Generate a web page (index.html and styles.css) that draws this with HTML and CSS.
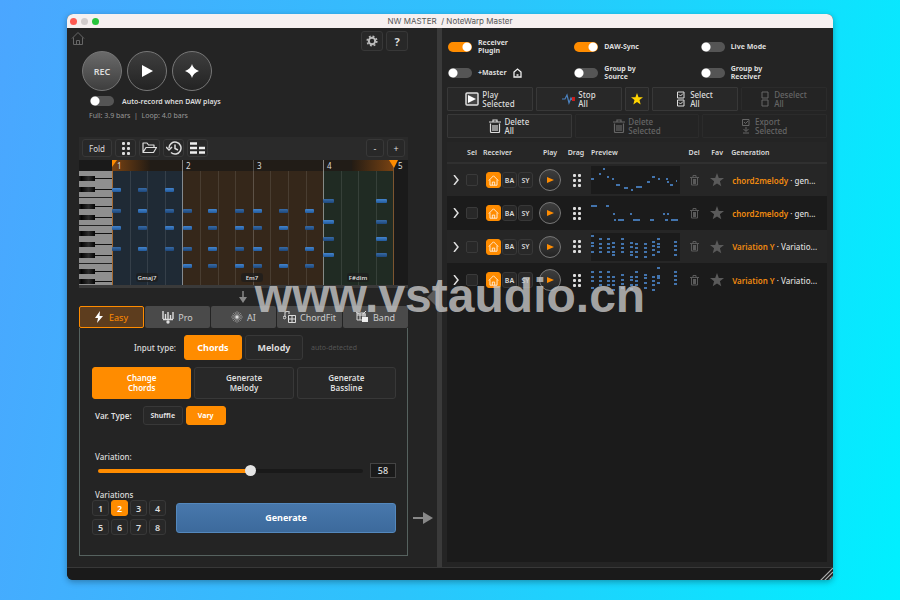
FILE: index.html
```html
<!DOCTYPE html>
<html lang="en">
<head>
  <meta charset="UTF-8" />
  <meta name="viewport" content="width=device-width, initial-scale=1.0" />
  <title>NW MASTER / NoteWarp Master</title>
  <link rel="stylesheet" href="styles.css">
</head>
<body>
  <!-- shared icons -->
  <svg class="sprite" aria-hidden="true">
    <symbol id="i-home" viewBox="0 0 14 14"><path d="M1 7 7 1l6 6M2.500 6v7h9V6M5.500 13V9h3v4" fill="none" stroke="currentColor"/></symbol>
    <symbol id="i-dots" viewBox="0 0 9 13"><g fill="currentColor"><rect x="1" y="0" width="3" height="3" rx="1"/><rect x="6" y="0" width="3" height="3" rx="1"/><rect x="1" y="5" width="3" height="3" rx="1"/><rect x="6" y="5" width="3" height="3" rx="1"/><rect x="1" y="10" width="3" height="3" rx="1"/><rect x="6" y="10" width="3" height="3" rx="1"/></g></symbol>
    <symbol id="i-trash" viewBox="0 0 12 14"><path d="M0 3h12M4 3V1h4v2M1.500 4.500v8q0 1 1 1h7q1 0 1-1v-8M4 6v6M6 6v6M8 6v6" fill="none" stroke="currentColor" stroke-width="1.200"/></symbol>
    <symbol id="i-star" viewBox="0 0 14 14"><path d="m7 0 1.800 4.900 5.200.2-4.100 3.200 1.400 5L7 10.400l-4.300 2.900 1.400-5L0 5.100l5.200-.2z" fill="currentColor"/></symbol>
    <symbol id="i-check" viewBox="0 0 8 16"><path d="M.5 1h6.500v6H.5zM.5 9H7v6H.5zM2 3.500l1.500 1.500L6 2.500M2 11.500l1.500 1.500L6 10.500" fill="none" stroke="currentColor"/></symbol>
    <symbol id="i-boxes" viewBox="0 0 8 16"><path d="M1 1h6v6H1zM1 9h6v6H1z" fill="none" stroke="currentColor"/></symbol>
  </svg>

  <div class="window">
    <header class="titlebar">
      <div class="lights"><i class="red"></i><i></i><i class="green"></i></div>
      <div class="title">NW MASTER &nbsp;/ NoteWarp Master</div>
    </header>

    <main class="panes">
      <section class="left">
        <div class="top-row">
          <svg class="home"><use href="#i-home"/></svg>
          <div class="top-buttons">
            <button class="btn square" aria-label="Settings"><svg width="12" height="12" viewBox="0 0 12 12"><circle cx="6" cy="6" r="3.200" fill="none" stroke="#bbb" stroke-width="2"/><circle cx="6" cy="6" r="4.800" fill="none" stroke="#bbb" stroke-width="1.600" stroke-dasharray="1.900 1.870"/></svg></button>
            <button class="btn square help">?</button>
          </div>
        </div>

        <div class="transport">
          <button class="round rec">REC</button>
          <button class="round" aria-label="Play"><svg width="12" height="12" viewBox="0 0 12 12"><path d="M1 0v12l11-6z" fill="#fff"/></svg></button>
          <button class="round" aria-label="Magic"><svg width="14" height="14" viewBox="0 0 14 14"><path d="M7 0q1.200 5 7 7-5.800 2-7 7-1.200-5-7-7 5.800-2 7-7z" fill="#fff"/></svg></button>
        </div>
        <label class="auto"><input type="checkbox" class="switch">Auto-record when DAW plays</label>
        <p class="info">Full: 3.9 bars &nbsp;|&nbsp; Loop: 4.0 bars</p>

        <div class="editor">
          <div class="toolbar">
            <button class="btn fold">Fold</button>
            <button class="btn" aria-label="Drag"><svg width="9" height="13"><use href="#i-dots"/></svg></button>
            <button class="btn" aria-label="Open"><svg width="15" height="12" viewBox="0 0 15 12"><path d="M1 10.500V1h4l1.500 2H12v2.500M1 10.500l3-5h10.500l-3 5z" fill="none" stroke="#ddd" stroke-width="1.200" stroke-linejoin="round"/></svg></button>
            <button class="btn" aria-label="History"><svg width="16" height="14" viewBox="0 0 16 14"><path d="M3 7a6 6 0 1 1 2 4.500M0 6l3 3 3-3M9 3.500V7.500l3 1.500" fill="none" stroke="#ddd" stroke-width="1.500"/></svg></button>
            <button class="btn" aria-label="Bars"><svg width="15" height="12" viewBox="0 0 15 12"><path d="M0 1.500h7M0 6h7M9 6h6M0 10.500h7M9 10.500h6" stroke="#eee" stroke-width="2.500"/></svg></button>
            <button class="btn zoom first">-</button>
            <button class="btn zoom">+</button>
          </div>
          <svg class="roll" id="roll" viewBox="0 0 329 125">
            <defs>
              <linearGradient id="loopIn"><stop offset="0" stop-color="#7a4312"/><stop offset="1" stop-color="#241c14"/></linearGradient>
              <linearGradient id="loopOut"><stop offset="0" stop-color="#241c14"/><stop offset="1" stop-color="#7a4312"/></linearGradient>
              <linearGradient id="key"><stop offset="0" stop-color="#222"/><stop offset=".15" stop-color="#050505"/><stop offset=".6" stop-color="#2c2c2c"/><stop offset="1" stop-color="#050505"/></linearGradient>
              <linearGradient id="note" x2="0" y2="1"><stop offset="0" stop-color="#4484cc"/><stop offset="1" stop-color="#225a9c"/></linearGradient>
              <linearGradient id="noteDim" x2="0" y2="1"><stop offset="0" stop-color="#386ba6"/><stop offset="1" stop-color="#1d477b"/></linearGradient>
            </defs>
          </svg>
          <div class="scroll"></div>
        </div>

        <svg class="arrow-down" viewBox="0 0 10 12"><path d="M1 6h8l-4 6z" fill="#888"/><path d="M5 0v7" stroke="#888" stroke-width="1.500"/></svg>

        <nav class="tabs">
          <button class="tab active"><svg width="8" height="12" viewBox="0 0 8 12"><path d="M5 0 0 7h3L2 12l6-7H4.500z" fill="#fff"/></svg>Easy</button>
          <button class="tab"><svg width="12" height="13" viewBox="0 0 12 13"><path d="M1 0v8M3.500 3v6M6 1v8M8.500 4v5M11 1v7M1 8.500h10" stroke="#ddd" stroke-width="1.400"/><circle cx="6" cy="11" r="1.700" fill="#ddd"/></svg>Pro</button>
          <button class="tab"><svg width="12" height="12" viewBox="0 0 12 12"><path d="M6 0v12M0 6h12M2 2l8 8M10 2l-8 8M4 1l4 10M8 1 4 11M1 4l10 4M1 8l10-4" stroke="#aaa" stroke-width=".6"/><circle cx="6" cy="6" r="1.500" fill="#ddd"/></svg>AI</button>
          <button class="tab"><svg width="13" height="12" viewBox="0 0 13 12"><path d="M5.500 4.500h7v7h-7zM9 4.500v7M5.500 8h7M2 6V1l4-1v3" fill="none" stroke="#ddd"/><circle cx="1.500" cy="6.500" r="1.300" fill="none" stroke="#ddd"/></svg>ChordFit</button>
          <button class="tab"><svg width="13" height="12" viewBox="0 0 13 12"><path d="M1 2h8v7H1zM1 4h9M4 2v7M7 2v7M0 1l3 2M10 0 7 3" fill="none" stroke="#ddd"/><path d="M6 6h6v5H6z" fill="#eee"/></svg>Band</button>
        </nav>

        <div class="workspace">
          <div class="panel">
            <div class="line input-type">
              <span>Input type:</span>
              <div class="group">
                <button class="btn big on">Chords</button>
                <button class="btn big">Melody</button>
              </div>
              <small>auto-detected</small>
            </div>
            <div class="modes">
              <button class="btn on">Change<br>Chords</button>
              <button class="btn">Generate<br>Melody</button>
              <button class="btn">Generate<br>Bassline</button>
            </div>
            <div class="line var-type">
              <span>Var. Type:</span>
              <div class="group">
                <button class="btn small">Shuffle</button>
                <button class="btn small on">Vary</button>
              </div>
            </div>
            <label class="caption" for="variation">Variation:</label>
            <div class="slider">
              <input type="range" id="variation" min="0" max="100" value="58">
              <input type="text" id="amount" aria-label="Variation amount" value="58">
            </div>
            <div class="bottom">
              <div>
                <div class="caption">Variations</div>
                <div class="counts">
                  <button class="btn">1</button><button class="btn on">2</button><button class="btn">3</button><button class="btn">4</button>
                  <button class="btn">5</button><button class="btn">6</button><button class="btn">7</button><button class="btn">8</button>
                </div>
              </div>
              <button class="generate">Generate</button>
            </div>
          </div>
          <svg class="arrow-right" viewBox="0 0 20 12"><path d="M0 6h10" stroke="#888" stroke-width="2"/><path d="M10 0v12l10-6z" fill="#888"/></svg>
        </div>
      </section>

      <div class="divider"><svg class="handle" viewBox="0 0 12 24"><path d="M12 0v24L0 12z" fill="#5a5a5a"/></svg></div>

      <section class="right">
        <div class="options">
          <label><input type="checkbox" class="switch" checked><span>Receiver<br>Plugin</span></label>
          <label><input type="checkbox" class="switch" checked><span>DAW-Sync</span></label>
          <label><input type="checkbox" class="switch"><span>Live Mode</span></label>
          <label><input type="checkbox" class="switch"><span>+Master</span><svg width="9" height="10" viewBox="0 0 9 10"><path d="M1 9V4l3.500-3L8 4v5zM3.500 7h2" fill="none" stroke="#eee" stroke-width="1.300"/></svg></label>
          <label><input type="checkbox" class="switch"><span>Group by<br>Source</span></label>
          <label><input type="checkbox" class="switch"><span>Group by<br>Receiver</span></label>
        </div>

        <div class="actions five">
          <button class="btn"><svg width="14" height="14" viewBox="0 0 14 14"><rect x="1" y="1" width="12" height="12" rx="1" fill="#444" stroke="#ddd" stroke-width="1.500"/><path d="M3 3v8l8-4z" fill="#fff"/></svg><span>Play<br>Selected</span></button>
          <button class="btn"><svg width="13" height="12" viewBox="0 0 13 12"><path d="M0 6h3l2-4 2 8 2-5 1 2" fill="none" stroke="#4a80bd" stroke-width="1.200"/><rect x="10" y="4" width="3" height="4" fill="#c81e1e"/></svg><span>Stop<br>All</span></button>
          <button class="btn gold" aria-label="Favourites"><svg width="12" height="12"><use href="#i-star"/></svg></button>
          <button class="btn wide"><svg width="8" height="16"><use href="#i-check"/></svg><span>Select<br>All</span></button>
          <button class="btn wide" disabled><svg width="8" height="16"><use href="#i-boxes"/></svg><span>Deselect<br>All</span></button>
        </div>
        <div class="actions three">
          <button class="btn"><svg width="12" height="14"><use href="#i-trash"/></svg><span>Delete<br>All</span></button>
          <button class="btn" disabled><svg width="12" height="14"><use href="#i-trash"/></svg><span>Delete<br>Selected</span></button>
          <button class="btn wide" disabled><svg width="8" height="16" viewBox="0 0 8 16"><path d="M.5 1.500H7v6H.5zM2 4l1.500 1.500L6 3M4 9v4M1.500 11 4 13.500 6.500 11M1 15h6" fill="none" stroke="currentColor"/></svg><span>Export<br>Selected</span></button>
        </div>

        <div class="list">
          <table>
            <colgroup><col class="c-open"><col class="c-sel"><col class="c-recv"><col class="c-play"><col class="c-drag"><col><col class="c-del"><col class="c-fav"><col class="c-gen"></colgroup>
            <thead>
              <tr><th></th><th>Sel</th><th class="start">Receiver</th><th>Play</th><th>Drag</th><th class="start">Preview</th><th>Del</th><th>Fav</th><th class="start">Generation</th></tr>
            </thead>
            <tbody id="rows"></tbody>
          </table>
        </div>
      </section>
    </main>

    <footer class="footer">
      <svg width="13" height="13" viewBox="0 0 13 13"><path d="M0 13 13 0M4 13l9-9M8 13l5-5" stroke="#aaa" stroke-width="1.200"/></svg>
    </footer>
  </div>

  <div class="watermark">www.vstaudio.cn</div>

  <script>
    // piano roll: [x, width, note centres]
    const chords = [
      [33, 9, [30, 51, 68, 89]], [59, 9, [30, 51, 68, 89]], [86, 9, [30, 51, 68, 89]],
      [104, 9, [51, 68, 89, 106]], [129, 9, [51, 68, 89, 106]], [156, 9, [51, 68, 89, 106]],
      [174, 9, [51, 68, 89, 106]], [200, 9, [51, 68, 89, 106]], [226, 9, [51, 68, 89, 106]],
      [244, 11, [41, 62, 79, 95]], [297, 11, [41, 62, 79, 95]]
    ];
    const rect = (x, y, w, h, fill, rx = 0) =>
      `<rect x="${x}" y="${y}" width="${w}" height="${h}" fill="${fill}" rx="${rx}"/>`;

    function drawRoll() {
      let out = rect(0, 0, 329, 125, "#1a1a1a");
      // ruler
      out += rect(33, 0, 282, 11, "#211c17") + rect(33, 0, 38, 11, "url(#loopIn)") + rect(273, 0, 42, 11, "url(#loopOut)");
      // chord regions
      out += rect(33, 11, 71, 114, "#1f2a35") + rect(104, 11, 140, 114, "#35271a") + rect(244, 11, 71, 114, "#202b23");
      for (let i = 1; i < 16; i++) {
        const x = Math.round(33 + i * 17.6);
        const bar = i % 4 === 0;
        const alpha = i === 4 || i === 12 ? 0.45 : bar ? 0.2 : 0.1;
        out += rect(x, bar ? 0 : 11, 1, bar ? 125 : 114, `rgba(255,255,255,${alpha})`);
      }
      out += rect(33, 11, 1, 114, "#a4672e") + rect(314, 0, 1, 125, "#7d5530");
      // keyboard
      out += rect(0, 11, 33, 114, "#8f8f8f");
      for (const y of [18, 29, 46, 57, 73, 84, 95, 111, 121]) {
        out += rect(16, y, 17, 1, "#111") + rect(0, y - 2, 16, 5, "url(#key)");
      }
      for (const y of [37, 65, 103]) out += rect(0, y, 33, 1, "#222");
      // notes
      chords.forEach(([x, w, ys], i) => ys.forEach((y, j) => {
        out += rect(x, y - 2, w, 4, (i + j) % 2 ? "url(#noteDim)" : "url(#note)", 1);
      }));
      // loop markers and labels
      out += `<path d="M33 0h5l-5 7zM310 0h9l-4 8z" fill="#ff8c00"/>`;
      [38, 107, 178, 248, 319].forEach((x, i) => {
        out += `<text x="${x}" y="9" class="bar-no">${i + 1}</text>`;
      });
      [["Gmaj7", 68], ["Em7", 173], ["F#dim", 279]].forEach(([name, x]) => {
        out += rect(x - 11, 113, 22, 9, "rgba(28,28,28,.7)", 3) + `<text x="${x}" y="120" class="chord">${name}</text>`;
      });
      document.getElementById("roll").innerHTML += out;
    }

    // preview notes: melody rows as [x, y, width], chord rows as [x, [ys]]
    const rows = [
      { name: "chord2melody", rest: "gen...", notes: [[0,13,3],[8,8,2],[12,3,2],[16,11,2],[21,13,2],[25,19,4],[33,22,4],[40,24,2],[45,21,6],[56,16,3],[61,11,3],[67,13,2],[75,13,2],[76,16,2],[79,19,3],[85,15,1]] },
      { name: "chord2melody", rest: "gen...", notes: [[0,7,6],[15,7,3],[22,15,2],[23,21,2],[27,21,6],[39,15,2],[42,21,7],[59,21,4],[72,15,2],[76,15,2],[74,21,3],[80,21,7]] },
      { name: "Variation Y", rest: "Variatio...", stacks: [[0,[3,10,13,19]],[8,[6,11,15,19]],[16,[6,11,15,19]],[21,[10,14,19,22]],[30,[6,11,15,19]],[39,[10,14,19,22]],[44,[11,15,19,24]],[53,[11,15,19,24]],[61,[9,13,17,22]],[66,[6,11,14,19]],[83,[9,13,17,22]]] },
      { name: "Variation Y", rest: "Variatio...", stacks: [[0,[6,11,15,22]],[8,[6,11,15,19]],[16,[6,11,15,19]],[21,[11,15,19,24]],[30,[9,14,18,22]],[39,[11,14,19,23]],[44,[6,11,15,19]],[53,[9,12,17,22]],[61,[11,15,19,24]],[66,[2,10,12,17]],[83,[6,10,14,18]]] }
    ];

    function preview(row) {
      const notes = row.notes || row.stacks.flatMap(([x, ys]) => ys.map(y => [x, y, 3]));
      return notes.map(([x, y, w]) => rect(x, y - 1, w, 2, "#4374ad")).join("");
    }

    drawRoll();
    document.getElementById("rows").innerHTML = rows.map((row, i) => `
      <tr>
        <td><button class="open" aria-label="Expand"><svg width="6" height="10" viewBox="0 0 6 10"><path d="m1 0 4 5-4 5" fill="none" stroke="#ddd" stroke-width="1.500"/></svg></button></td>
        <td><input type="checkbox" class="pick" aria-label="Select row ${i + 1}"></td>
        <td><div class="receivers"><button class="btn on" aria-label="Master"><svg width="11" height="11"><use href="#i-home"/></svg></button><button class="btn">BA</button><button class="btn">SY</button></div></td>
        <td><button class="round mini" aria-label="Play"><svg width="7" height="6" viewBox="0 0 7 6"><path d="M0 0v6l7-3z" fill="#ff8c00"/></svg></button></td>
        <td><svg class="grip" width="9" height="13"><use href="#i-dots"/></svg></td>
        <td class="start"><svg class="preview" viewBox="0 0 89 28">${preview(row)}</svg></td>
        <td><button class="icon" aria-label="Delete"><svg width="9" height="11" viewBox="0 0 9 11"><path d="M0 2.500h9M3 2V.5h3V2M1.500 3v7h6V3" fill="none" stroke="currentColor"/><path d="M3 4h3v5H3z" fill="currentColor"/></svg></button></td>
        <td><button class="icon" aria-label="Favourite"><svg width="14" height="14"><use href="#i-star"/></svg></button></td>
        <td class="gen"><b>${row.name}</b> · ${row.rest}</td>
      </tr>`).join("");

    const range = document.getElementById("variation");
    const amount = document.getElementById("amount");
    range.addEventListener("input", () => {
      amount.value = range.value;
      range.style.setProperty("--fill", range.value + "%");
    });
  </script>
</body>
</html>
```
FILE: styles.css
```css
* {
  box-sizing: border-box;
}

body {
  margin: 0;
  min-height: 100vh;
  padding: 14px 67px 20px;
  display: flex;
  position: relative;
  font-family: "Noto Sans", sans-serif;
  font-size: 8px;
  color: #ddd;
  background: linear-gradient(100deg, #4ba6ff, #2cc4fc 50%, #00f0ff);
}

button, input {
  font: inherit;
  color: inherit;
  margin: 0;
  padding: 0;
}

button {
  display: flex;
  align-items: center;
  justify-content: center;
  border: none;
  background: none;
}

svg {
  flex: none;
  display: block;
}

.sprite {
  position: absolute;
  width: 0;
  height: 0;
}

.window {
  flex: 1;
  min-width: 0;
  display: flex;
  flex-direction: column;
  border-radius: 6px;
  overflow: hidden;
  background: #242424;
  box-shadow: 0 2px 6px rgba(0, 0, 0, 0.3);
}

.titlebar {
  height: 14px;
  display: grid;
  grid-template-columns: 1fr auto 1fr;
  align-items: center;
  background: #f6f0f0;
  color: #555;
  font-family: Inter, sans-serif;
}

.lights {
  display: flex;
  gap: 4px;
  padding-left: 3px;
}

.lights i {
  width: 7px;
  height: 7px;
  border-radius: 50%;
  background: #d2cccc;
}

.lights .red { background: #ff5a52; }
.lights .green { background: #28c53c; }

.panes {
  flex: 1;
  display: grid;
  grid-template-columns: 370fr 5px 391fr;
}

/* left side */
.left {
  min-width: 0;
  display: flex;
  flex-direction: column;
  padding-left: 12px;
  padding-bottom: 11px;
}

.top-row {
  display: flex;
  justify-content: space-between;
  align-items: flex-start;
  margin-left: -8px;
  padding: 3px 29px 0 0;
}

.home {
  width: 14px;
  height: 15px;
  color: #666;
}

.top-buttons {
  display: flex;
  gap: 3px;
}

.btn {
  border: 1px solid #383838;
  border-radius: 3px;
  background: #282828;
  color: #ddd;
}

.btn.on {
  background: #ff8c00;
  border-color: #ff8c00;
  color: #fff;
}

.square {
  width: 22px;
  height: 20px;
}

.help {
  font-size: 11px;
  font-weight: bold;
}

.transport {
  display: flex;
  gap: 5px;
  padding-left: 3px;
}

.round {
  width: 40px;
  height: 40px;
  border: 1px solid #777;
  border-radius: 50%;
  background: linear-gradient(#3e3e3e, #232323);
}

.rec {
  background: linear-gradient(#6a6a6a, #3e3e3e);
  font-size: 9px;
  font-weight: 600;
}

.switch {
  appearance: none;
  flex: none;
  width: 24px;
  height: 10px;
  border-radius: 5px;
  background: radial-gradient(circle at 5px 5px, #fff 4px, #555 5px);
}

.switch:checked {
  background: radial-gradient(circle at 19px 5px, #fff 4px, #ff8c00 5px);
}

.auto {
  display: flex;
  align-items: center;
  gap: 8px;
  height: 10px;
  margin: 5px 0 0 11px;
  font-size: 7px;
  font-weight: 600;
}

.info {
  margin: 5px 0 16px 10px;
  line-height: 10px;
  color: #999;
  font-size: 7px;
}

.editor {
  margin-right: 29px;
  background: #2a2a2a;
}

.toolbar {
  display: flex;
  gap: 3px;
  padding: 2px 3px 3px;
}

.toolbar .btn {
  width: 21px;
  height: 18px;
}

.toolbar .fold {
  width: 30px;
}

.toolbar .zoom {
  width: 18px;
  font-size: 9px;
}

.toolbar .first {
  margin-left: auto;
}

.roll {
  width: 100%;
}

.bar-no {
  font-size: 8px;
  fill: #ddd;
}

.chord {
  font-size: 6px;
  font-weight: 600;
  text-anchor: middle;
  fill: #ddd;
}

.scroll {
  height: 3px;
  background: #3a3a3a;
}

.arrow-down {
  width: 10px;
  height: 12px;
  margin: 3px 0 3px 159px;
}

.tabs {
  display: grid;
  grid-template-columns: repeat(5, 1fr);
  gap: 1px;
  margin-right: 29px;
}

.tab {
  height: 22px;
  gap: 4px;
  border-radius: 2px;
  background: #4a4a4a;
  color: #ccc;
  font-size: 9px;
}

.tab.active {
  gap: 6px;
  border: 1px solid #ff8c00;
  background: #5d3d1e;
  color: #ff8c00;
}

.workspace {
  flex: 1;
  display: grid;
  grid-template-columns: 1fr 29px;
}

.panel {
  padding: 7px 11px 7px 12px;
  border: 1px solid #56625f;
  border-top: none;
}

.line {
  display: flex;
  align-items: center;
  gap: 8px;
  font-weight: 500;
}

.group {
  display: flex;
  gap: 3px;
}

.input-type {
  padding-left: 42px;
}

.big {
  width: 58px;
  height: 25px;
  font-size: 9px;
  font-weight: bold;
}

.line small {
  font-size: 7px;
  font-weight: normal;
  color: #555;
}

.modes {
  display: grid;
  grid-template-columns: repeat(3, 1fr);
  gap: 3px;
  margin: 7px 0;
}

.modes .btn {
  height: 32px;
  line-height: 10px;
  font-weight: 600;
}

.var-type {
  gap: 11px;
  padding-left: 3px;
  font-weight: 600;
}

.small {
  width: 40px;
  height: 19px;
  font-size: 7px;
  font-weight: bold;
}

.caption {
  display: block;
  padding-left: 3px;
  line-height: 10px;
  font-weight: 500;
}

label.caption {
  margin-top: 27px;
}

.slider {
  display: flex;
  align-items: center;
  gap: 7px;
  padding-left: 6px;
  margin: 1px 0 12px;
}

#variation {
  --fill: 58%;
  appearance: none;
  flex: 1;
  min-width: 0;
  height: 4px;
  border-radius: 2px;
  background: linear-gradient(90deg, #ff8c00 var(--fill), #191919 var(--fill));
}

#variation::-webkit-slider-thumb {
  appearance: none;
  width: 11px;
  height: 11px;
  border-radius: 50%;
  background: #e4e4e4;
}

#amount {
  width: 26px;
  height: 15px;
  border: 1px solid #444;
  background: #1a1a1a;
  text-align: center;
  font-size: 9px;
  font-weight: 500;
}

.bottom {
  display: flex;
  align-items: center;
  gap: 10px;
}

.counts {
  display: grid;
  grid-template-columns: repeat(4, 17px);
  gap: 3px 2px;
}

.counts .btn {
  height: 16px;
  font-size: 9px;
  font-weight: 600;
}

.generate {
  flex: 1;
  height: 30px;
  margin-top: 10px;
  border: 1px solid #5488bd;
  border-radius: 3px;
  background: linear-gradient(#4878ac, #3c6a9c);
  color: #fff;
  font-size: 9px;
  font-weight: bold;
}

.arrow-right {
  align-self: end;
  width: 20px;
  height: 12px;
  margin: 0 0 32px 5px;
}

.divider {
  position: relative;
  background: #3a3a3a;
}

.handle {
  position: absolute;
  right: 3px;
  top: 257px;
  width: 12px;
  height: 24px;
}

/* right side */
.right {
  min-width: 0;
  display: flex;
  flex-direction: column;
  padding: 10px 6px 5px 5px;
}

.options {
  display: grid;
  grid-template-columns: repeat(3, 1fr);
  row-gap: 9px;
  padding-left: 1px;
}

.options label {
  display: flex;
  align-items: center;
  gap: 6px;
  height: 17px;
  line-height: 8px;
  font-size: 7px;
  font-weight: bold;
}

.actions {
  display: grid;
  gap: 3px;
}

.five {
  grid-template-columns: 1fr 1fr 24px 1fr 1fr;
  margin-top: 6px;
}

.three {
  grid-template-columns: repeat(3, 1fr);
  margin: 3px 0 4px;
}

.actions .btn {
  gap: 3px;
  height: 24px;
  border-radius: 1px;
  line-height: 9px;
  text-align: left;
  font-weight: 500;
}

.actions .wide {
  gap: 5px;
}

.actions .btn:disabled {
  color: #666;
  background: #242424;
  border-color: #2b2b2b;
}

.actions .gold {
  color: #ffd400;
}

.list {
  flex: 1;
  background: #1b1b1b;
}

table {
  width: 100%;
  table-layout: fixed;
  border-collapse: collapse;
}

.c-open { width: 17px; }
.c-sel { width: 16px; }
.c-recv { width: 56px; }
.c-play { width: 28px; }
.c-drag { width: 24px; }
.c-del { width: 24px; }
.c-fav { width: 22px; }
.c-gen { width: 26%; }

th, td {
  padding: 0;
}

th {
  height: 21px;
  border-bottom: 2px solid #303030;
  background: #262626;
  font-size: 7px;
  font-weight: 600;
}

.start {
  text-align: left;
  padding-left: 3px;
}

td {
  height: 33px;
}

tbody tr:nth-child(odd) {
  background: #262626;
}

tbody tr:nth-child(even) td {
  height: 34px;
}

td > svg, td > button, td > input {
  margin: 0 auto;
}

.pick {
  appearance: none;
  display: block;
  width: 12px;
  height: 12px;
  border: 1px solid #3a3a3a;
  border-radius: 2px;
  background: #282828;
}

.receivers {
  display: flex;
  gap: 1px;
  padding-left: 6px;
}

.receivers .btn {
  width: 15px;
  height: 16px;
  font-size: 7px;
  font-weight: 600;
}

td .mini {
  width: 22px;
  height: 22px;
}

.preview {
  width: 89px;
  max-width: 100%;
  background: #1b1b1b;
}

td .preview {
  margin: 0;
}

.icon {
  color: #5a5a5a;
}

.gen {
  white-space: nowrap;
  padding-left: 4px;
  font-weight: 500;
}

.gen b {
  color: #f08a10;
  font-weight: 600;
}

.footer {
  display: flex;
  justify-content: flex-end;
  height: 13px;
  border-top: 1px solid #383838;
  background: #1a1a1a;
}

.watermark {
  position: absolute;
  top: 269px;
  left: 0;
  right: 0;
  text-align: center;
  font: bold 48px/54px "Liberation Sans", sans-serif;
  color: rgba(200, 200, 200, 0.8);
  pointer-events: none;
}
```
